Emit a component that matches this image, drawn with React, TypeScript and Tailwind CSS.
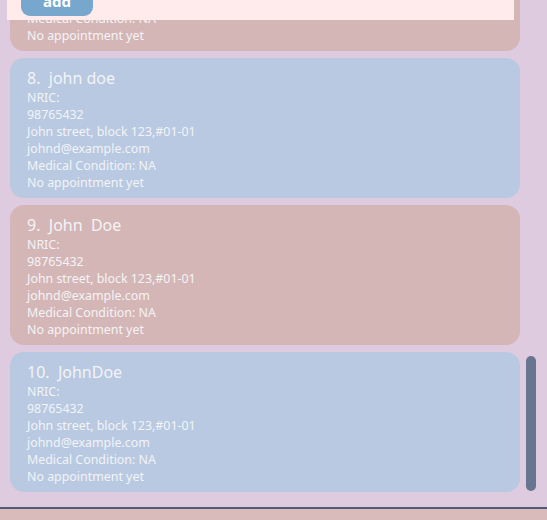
const cards = [
  { title: "7.  Alex Yeoh", bg: "bg-[#d5b6b6]" },
  { title: "8.  john doe", bg: "bg-[#b8c9e1]" },
  { title: "9.  John  Doe", bg: "bg-[#d5b6b6]" },
  { title: "10.  JohnDoe", bg: "bg-[#b8c9e1]" },
];

const lines = [
  "NRIC:",
  "98765432",
  "John street, block 123,#01-01",
  "johnd@example.com",
  "Medical Condition: NA",
  "No appointment yet",
];

export default function App() {
  return (
    <div
      className="relative h-[520px] w-[547px] overflow-hidden bg-[#dfcbe0]"
      style={{ fontFamily: '"Noto Sans", sans-serif' }}
    >
      <div className="h-[507px] overflow-hidden">
        <div className="-mt-[89px] flex flex-col gap-[7px] pl-[10px] w-[520px]">
          {cards.map((c) => (
            <div
              key={c.title}
              className={`${c.bg} h-[140px] rounded-[14px] pl-[17px] pt-[10px] text-[#f3f4f7]`}
            >
              <div className="h-[20px] text-[16px] leading-[20px] whitespace-pre">
                {c.title}
              </div>
              <div className="mt-[1px] text-[12.4px] leading-[17px]">
                {lines.map((l) => (
                  <div key={l}>{l}</div>
                ))}
              </div>
            </div>
          ))}
        </div>
      </div>
      <div className="absolute left-[526px] top-[356px] h-[135px] w-[10px] rounded-full bg-[#68758f]" />
      <div className="h-[2px] bg-[#525a75]" />
      <div className="h-[11px] bg-[#dabbbb] pt-[9px] pl-[2px] text-[13px] leading-[16px] text-[#c08a8a]">
        listed all patients
      </div>
      <div className="absolute left-[7px] top-0 h-[20px] w-[507px] overflow-hidden bg-[#ffebeb]">
        <div className="-mt-[14px] ml-[14px] flex h-[30px] w-[72px] items-center justify-center rounded-[9px] bg-[#78a7cd] text-[15px] font-bold text-white">
          add
        </div>
      </div>
    </div>
  );
}
